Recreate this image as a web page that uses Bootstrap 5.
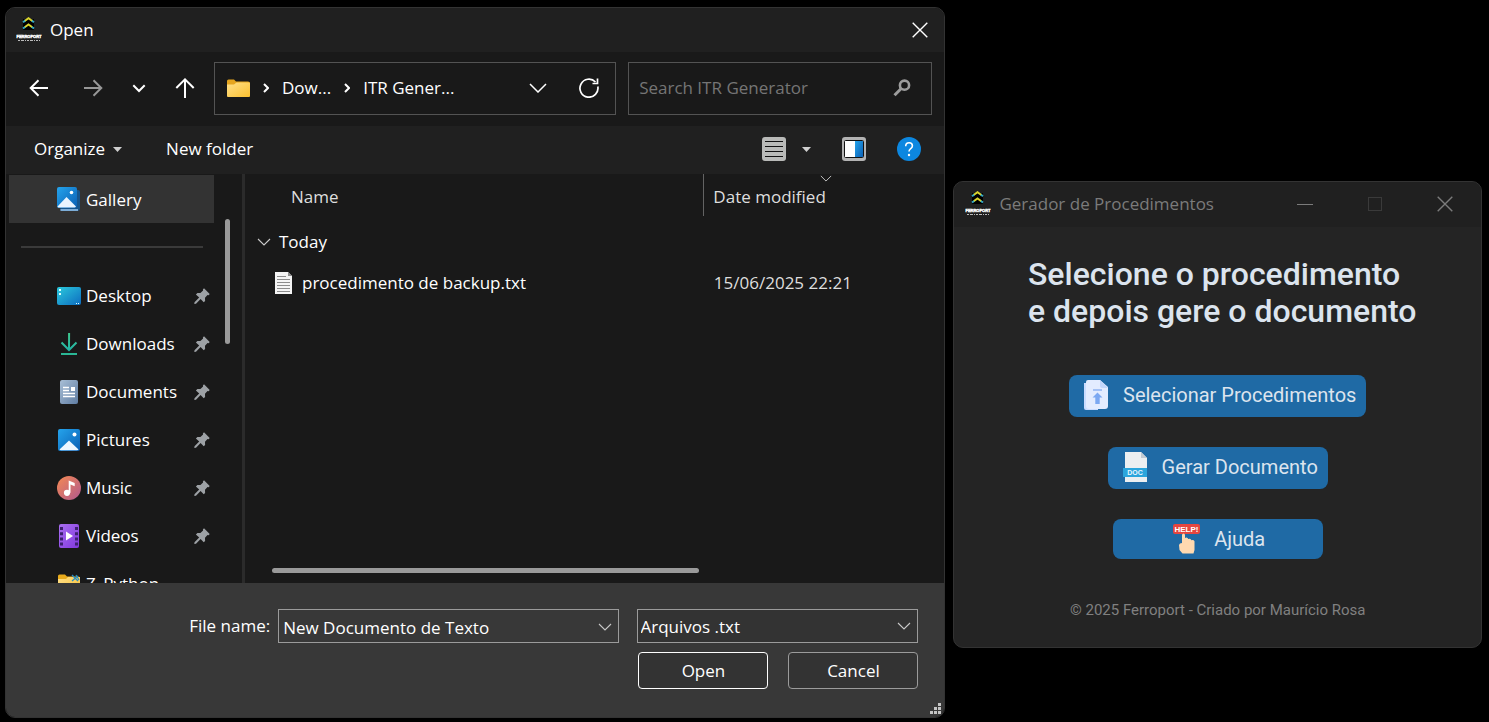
<!DOCTYPE html>
<html lang="pt-BR" data-bs-theme="dark">
<head>
<meta charset="utf-8">
<meta name="viewport" content="width=device-width, initial-scale=1">
<title>Gerador de Procedimentos</title>
<link href="https://cdn.jsdelivr.net/npm/bootstrap@5.3.0/dist/css/bootstrap.min.css" rel="stylesheet">
<style>
  body { background: #000; color: #fff; font-family: "Open Sans", "Noto Sans", sans-serif; font-size: 17px; line-height: 24px; }
  svg { display: block; flex: none; }
  button, input, select { font: inherit; color: inherit; }
  .desktop { min-height: 100vh; padding: 7px 7px 4px 5px; gap: 8px; }
  .win { border: 1px solid #333; border-radius: 10px; overflow: hidden; min-width: 0; }
  .picker { flex: 941 1 0; background: #191919; }
  .app { flex: 528 1 0; background: #242424; margin-top: 174px; }
  .plain { background: none; border: 0; padding: 0; display: flex; align-items: center; justify-content: center; }

  .titlebar { background: #202020; height: 44px; padding: 0 16px 0 10px; gap: 8px; }
  .addressbar { height: 74px; padding: 0 12px 2px 18px; }
  .arrows { width: 190px; gap: 16px; }
  .arrows .plain { width: 30px; height: 32px; }
  .path, .search { border: 1px solid #535353; height: 53px; }
  .path { flex: 1 1 0; padding: 0 16px 0 12px; min-width: 0; }
  .path a { color: #fff; text-decoration: none; }
  .crumb { margin: 0 13px; }
  .search { flex: 0 0 33.5%; margin-left: 12px; padding: 0 20px 0 10px; min-width: 0; }
  .search input { background: none; border: 0; outline: 0; min-width: 0; padding: 0; }
  .search input::placeholder { color: #757575; opacity: 1; }
  .toolbar { background: #202020; height: 48px; padding: 0 23px 2px 28px; gap: 31px; }
  .toolbar .newdir { margin: 0 auto 0 13px; }

  .browser { flex: 1 1 0; min-height: 0; }
  .side { width: 239px; padding: 1px 0 0 3px; border-right: 3px solid #2b2b2b; overflow: hidden; }
  .places { width: 205px; }
  .place { display: flex; align-items: center; height: 48px; padding: 1px 4px 0 47px; gap: 5px; color: #fff; text-decoration: none; flex: none; }
  .place.current { background: #333; }
  .place span { flex: 1; white-space: nowrap; }
  .split { height: 48px; padding: 23px 11px 0 12px; flex: none; }
  .split div { height: 2px; background: #3a3a3a; }
  .thumb { background: #9a9a9a; border-radius: 3px; }
  .thumb-v { width: 5px; height: 125px; margin: 44px 0 0 11px; }
  .thumb-h { width: 61%; height: 5px; margin: 0 0 10px 27px; }
  .files { width: 100%; table-layout: fixed; border-collapse: collapse; }
  .files th, .files td { padding: 0; font-weight: 400; }
  .files thead th { height: 42px; color: #dedede; padding: 4px 0 0 46px; }
  .files thead th + th { border-left: 1px solid #636363; padding-left: 9px; }
  .files td + td { color: #dedede; padding-left: 10px; }
  .sortmark { position: absolute; left: 116px; top: 1px; }
  .group { height: 52px; padding-left: 12px !important; }
  .entry { height: 30px; padding-left: 29px !important; }

  .bottom { background: #383838; padding: 26px 26px 28px 0; position: relative; }
  .fieldbox { border: 1px solid #9b9b9b; height: 34px; min-width: 0; }
  .namebox { flex: 0 0 37.3%; padding: 2px 6px 0 4px; margin: 0 18px 0 8px; }
  .namebox input { background: none; border: 0; outline: 0; min-width: 0; padding: 0; height: 30px; }
  .typebox { flex: 0 0 30.9%; position: relative; background: #333; }
  .typebox select { appearance: none; background: none; border: 0; width: 100%; height: 32px; padding: 1px 24px 0 3px; outline: 0; }
  .typebox svg { position: absolute; right: 6px; top: 12px; pointer-events: none; }
  .actions { gap: 20px; margin-top: 9px; }
  .act { width: 130px; height: 37px; background: #333; border: 1px solid #9b9b9b; border-radius: 4px; padding: 1px 0 0; }
  .act.main { border-color: #fff; }
  .grip { position: absolute; right: 3px; bottom: 3px; }
  .label-col { flex: 1 1 0; text-align: right; white-space: nowrap; }

  .app .titlebar { color: #7b7b7b; padding: 0 28px 2px 11px; height: 45px; }
  .controls { gap: 54px; }
  .app-body { font-family: Roboto, sans-serif; padding: 29px 16px 27px; }
  .app h1 { font-size: 32px; line-height: 37px; font-weight: 500; color: #dce4ee; margin: 0 0 45px 9px; }
  .cta { background: #1f6aa5; color: #dce4ee; border: 0; border-radius: 8px; font-size: 20px; line-height: 24px; height: 42px; padding: 0 10px 2px 12px; display: flex; align-items: center; justify-content: center; gap: 12px; white-space: nowrap; }
  .cta.help { width: 210px; height: 40px; padding-bottom: 0; }
  .stack { gap: 30px; }
  .credit { font-size: 15px; line-height: 20px; color: #808080; margin: 41px 0 0; }
</style>
</head>
<body>
<svg width="0" height="0" class="position-absolute" aria-hidden="true">
  <defs>
    <linearGradient id="gBlue" x1="0" y1="0" x2="1" y2="1"><stop offset="0" stop-color="#25a4ec"/><stop offset="1" stop-color="#0a5fb4"/></linearGradient>
    <linearGradient id="gDesk" x1="0" y1="0" x2="1" y2="1"><stop offset="0" stop-color="#2bc9dc"/><stop offset="1" stop-color="#0d6cc0"/></linearGradient>
    <linearGradient id="gDoc" x1="0" y1="0" x2="1" y2="1"><stop offset="0" stop-color="#a9bfd6"/><stop offset="1" stop-color="#5f7da3"/></linearGradient>
    <linearGradient id="gMus" x1="0" y1="0" x2="1" y2="1"><stop offset="0" stop-color="#f58a52"/><stop offset="1" stop-color="#b0588f"/></linearGradient>
    <linearGradient id="gVid" x1="0" y1="0" x2="1" y2="1"><stop offset="0" stop-color="#a96ff0"/><stop offset="1" stop-color="#8238de"/></linearGradient>
    <linearGradient id="gFold" x1="0" y1="0" x2="1" y2="1"><stop offset="0" stop-color="#ffe08a"/><stop offset="1" stop-color="#fbc02f"/></linearGradient>
    <linearGradient id="gDown" x1="0" y1="0" x2="0" y2="1"><stop offset="0" stop-color="#3fc98d"/><stop offset="1" stop-color="#22b3a5"/></linearGradient>
    <symbol id="logo" viewBox="0 0 26 26">
      <rect x="7" y="2" width="11" height="11" fill="#000"/>
      <path d="M7 5.200 9.500 3.400M15.500 3.400l2.500 1.800M7 11.500 9.500 9.700M15.500 9.700l2.500 1.800" stroke="#35a8c4" stroke-width="2"/>
      <path d="M9 3.700 12.500 1.200l3.500 2.500M9 10l3.500-2.500L16 10" fill="none" stroke="#d8d32c" stroke-width="2"/>
      <text x="13" y="20.500" text-anchor="middle" font-family="Liberation Sans, sans-serif" font-weight="700" font-size="4" fill="#fff" stroke="#fff" stroke-width=".4">FERROPORT</text>
      <path d="M2 23.500h22" stroke="#bbb" stroke-dasharray="2 1 3 1 1 1"/>
    </symbol>
    <symbol id="pin" viewBox="0 0 16 16"><path fill="#9da1a5" d="M10 .3l5.700 5.700-1 1.200-1.200-.1-2.500 2.700.1 3.100-1.400 1.400-3.100-3.200-4.600 4.600-1.700.2.200-1.700L5.200 9.600 1.900 6.500l1.500-1.500 3 .1L9.100 2.600 8.900 1.400z"/></symbol>
    <symbol id="chev" viewBox="0 0 14 8"><path d="M1 1l6 6 6-6" fill="none" stroke="#c8c8c8" stroke-width="1.100"/></symbol>
    <symbol id="x" viewBox="0 0 16 16"><path d="M.7.7l14.600 14.600M15.300.7.7 15.300" stroke="currentColor" stroke-width="1.400"/></symbol>
  </defs>
</svg>

<main class="desktop d-flex align-items-start">

  <section class="win picker d-flex flex-column align-self-stretch" aria-label="Open">
    <header class="titlebar d-flex align-items-center">
      <svg width="26" height="26"><use href="#logo"/></svg>
      <span class="flex-grow-1">Open</span>
      <button class="plain" aria-label="Close"><svg width="16" height="16"><use href="#x"/></svg></button>
    </header>

    <div class="addressbar d-flex align-items-center">
      <nav class="arrows d-flex flex-shrink-0" aria-label="History">
        <button class="plain" aria-label="Back"><svg width="20" height="18" viewBox="0 0 20 18" fill="none" stroke="#fff" stroke-width="2"><path d="M19 9H2M9.500 1.200 1.700 9l7.800 7.800"/></svg></button>
        <button class="plain ms-2" aria-label="Forward"><svg width="20" height="18" viewBox="0 0 20 18" fill="none" stroke="#979797" stroke-width="2"><path d="M1 9h17M10.500 1.200 18.300 9l-7.800 7.800"/></svg></button>
        <button class="plain" aria-label="Recent locations"><svg width="14" height="9" viewBox="0 0 14 9" fill="none" stroke="#fff" stroke-width="2"><path d="M1.300 1.300 7 7l5.700-5.700"/></svg></button>
        <button class="plain" aria-label="Up"><svg width="20" height="20" viewBox="0 0 20 20" fill="none" stroke="#fff" stroke-width="2"><path d="M10 20V2M1.300 10 10 1.400l8.700 8.600"/></svg></button>
      </nav>
      <div class="path d-flex align-items-center">
        <svg width="23" height="19" viewBox="0 0 23 19"><path d="M0 2Q0 .5 1.500.5H7l2 2h12Q23 2.500 23 4v12H0z" fill="#e5a51f"/><path d="M0 5.500h7l2.500-2H22q1 0 1 1V17q0 1-1 1H1q-1 0-1-1z" fill="url(#gFold)"/></svg>
        <svg class="crumb" width="6" height="10" viewBox="0 0 6 10"><path d="M1 1l4 4-4 4" fill="none" stroke="#fff" stroke-width="2"/></svg>
        <a href="#">Dow...</a>
        <svg class="crumb" width="6" height="10" viewBox="0 0 6 10"><path d="M1 1l4 4-4 4" fill="none" stroke="#fff" stroke-width="2"/></svg>
        <a href="#" class="flex-grow-1 text-nowrap">ITR Gener...</a>
        <button class="plain me-4" aria-label="Previous locations"><svg width="18" height="10" viewBox="0 0 18 10" fill="none" stroke="#fff" stroke-width="1.500"><path d="M1 1l8 8 8-8"/></svg></button>
        <button class="plain ms-2" aria-label="Refresh"><svg width="20" height="20" viewBox="0 0 20 20" fill="none" stroke="#fff" stroke-width="1.700"><path d="M18.800 8.500A9 9 0 1 1 16.500 4M18.500.5v5h-5"/></svg></button>
      </div>
      <div class="search d-flex align-items-center">
        <input class="flex-grow-1" type="search" placeholder="Search ITR Generator" aria-label="Search ITR Generator">
        <svg width="18" height="18" viewBox="0 0 18 18" fill="none" stroke="#9c9c9c"><circle cx="11.500" cy="6.200" r="4.600" stroke-width="2.600"/><path d="M8 9.700l-6.500 6.600" stroke-width="3"/></svg>
      </div>
    </div>

    <div class="toolbar d-flex align-items-center">
      <button class="plain">Organize<svg class="ms-2" width="9" height="5" viewBox="0 0 9 5"><path d="M0 0h9L4.500 5z" fill="#d0d0d0"/></svg></button>
      <button class="plain newdir">New folder</button>
      <button class="plain gap-3" aria-label="Change view"><svg width="24" height="24" viewBox="0 0 24 24"><rect width="24" height="24" rx="3" fill="#b9bab8"/><path d="M3 4.500h18M3 9.500h18M3 14.500h18M3 19.500h18" stroke="#111"/></svg><svg width="9" height="5" viewBox="0 0 9 5"><path d="M0 0h9L4.500 5z" fill="#d0d0d0"/></svg></button>
      <button class="plain" aria-label="Preview pane"><svg width="24" height="24" viewBox="0 0 24 24"><rect width="24" height="24" rx="3" fill="#b3b3b3"/><rect x="2.500" y="3.500" width="19" height="17" rx="1" fill="#fff" stroke="#111"/><path d="M13 4h8v16h-8z" fill="url(#gBlue)"/></svg></button>
      <button class="plain" aria-label="Help"><svg width="24" height="24" viewBox="0 0 24 24"><circle cx="12" cy="12" r="12" fill="#0c87e0"/><path d="M8.700 9.200q0-3.500 3.400-3.500 3.300 0 3.300 3 0 1.700-1.700 2.900Q12 12.800 12 14.600" fill="none" stroke="#fff" stroke-width="1.600"/><circle cx="12" cy="18" r="1.200" fill="#fff"/></svg></button>
    </div>

    <div class="browser d-flex">
      <aside class="side d-flex flex-shrink-0">
        <nav class="places d-flex flex-column flex-shrink-0" aria-label="Places">
          <a href="#" class="place current"><svg width="25" height="25" viewBox="0 0 25 25"><path d="M21 3h1q2 0 2 2v16q0 3-3 3H6q-2 0-2-2z" fill="#16558c"/><path d="M4.500 23H22" stroke="#9fcaf0" stroke-width="1.600"/><rect x="1" width="20" height="21" rx="2" fill="url(#gBlue)"/><path d="M1.500 19.500 10.500 10l9.500 9.500q-.5 1-1.500 1h-16q-1 0-1-1z" fill="#e9f4ff"/><circle cx="15.500" cy="5.500" r="1.800" fill="#fff"/></svg><span>Gallery</span></a>
          <div class="split"><div></div></div>
          <a href="#" class="place"><svg width="25" height="20" viewBox="0 0 25 20"><rect x="1" y="1" width="24" height="18" rx="2" fill="url(#gDesk)"/><path d="M3 3h2v2H3zM3 7h2v2H3zM20 17h1v1h-1zM22 17h1v1h-1z" fill="#dff"/></svg><span>Desktop</span><svg width="16" height="16"><use href="#pin"/></svg></a>
          <a href="#" class="place"><svg width="25" height="24" viewBox="0 0 25 24" fill="none" stroke="url(#gDown)" stroke-width="2"><path d="M13.100 1 13 18M5.500 10.500 13 18l7.500-7.500"/><path d="M5 22h16" stroke="#2ab795"/></svg><span>Downloads</span><svg width="16" height="16"><use href="#pin"/></svg></a>
          <a href="#" class="place"><svg width="25" height="24" viewBox="0 0 25 24"><rect x="4" width="18" height="24" rx="2" fill="url(#gDoc)"/><path d="M7 7.500h6M7 10.500h6M7 13.500h12M7 16.500h12" stroke="#fff" stroke-width="1.300"/><path d="M15 7h4v4h-4z" fill="#fff"/></svg><span>Documents</span><svg width="16" height="16"><use href="#pin"/></svg></a>
          <a href="#" class="place"><svg width="25" height="22" viewBox="0 0 25 22"><rect x="2" width="22" height="22" rx="2" fill="url(#gBlue)"/><path d="M3.500 20.500 13 11.500l9.500 9q-.5.800-1.500.8H5q-1 0-1.500-.8z" fill="#eef7ff"/><circle cx="18.500" cy="5.500" r="2" fill="#fff"/></svg><span>Pictures</span><svg width="16" height="16"><use href="#pin"/></svg></a>
          <a href="#" class="place"><svg width="25" height="24" viewBox="0 0 25 24"><circle cx="13" cy="12" r="12" fill="url(#gMus)"/><circle cx="11" cy="16.800" r="3.100" fill="#fff"/><path d="M12.700 16.800V4.500l6 2.500v3.200l-4.200-1.700v8.300z" fill="#fff"/></svg><span>Music</span><svg width="16" height="16"><use href="#pin"/></svg></a>
          <a href="#" class="place"><svg width="25" height="24" viewBox="0 0 25 24"><rect x="3" width="20" height="24" rx="2" fill="url(#gVid)"/><path d="M5.500 3v19M20.500 3v19" stroke="#3d2070" stroke-width="3" stroke-dasharray="3 2.200"/><path d="M10 7.500v9l7-4.500z" fill="#fff"/></svg><span>Videos</span><svg width="16" height="16"><use href="#pin"/></svg></a>
          <a href="#" class="place"><svg width="25" height="20" viewBox="0 0 25 20"><path d="M2 2Q2 .5 3.500.5H9l2 2h11q2 0 2 1.500v14H2z" fill="#e9ab1c"/><path d="M2 5h8l2-2h12v16H2z" fill="url(#gFold)"/><path d="M16 1l6 6M22 2l-6 5M20 1l3 5" stroke="#2c8fc0" stroke-width="1.300"/></svg><span>Z_Python</span></a>
        </nav>
        <div class="thumb thumb-v flex-shrink-0"></div>
      </aside>

      <div class="flex-grow-1 d-flex flex-column">
        <table class="files">
          <colgroup><col style="width:65.600%"><col></colgroup>
          <thead>
            <tr><th scope="col">Name</th><th scope="col" class="position-relative">Date modified<svg class="sortmark" width="12" height="7"><use href="#chev"/></svg></th></tr>
          </thead>
          <tbody>
            <tr><th class="group" colspan="2" scope="rowgroup"><div class="d-flex align-items-center gap-2"><svg width="14" height="8"><use href="#chev"/></svg>Today</div></th></tr>
            <tr><td class="entry"><div class="d-flex align-items-center text-nowrap"><svg class="me-2" width="20" height="22" viewBox="0 0 20 22"><path d="M1 0h13l4 4v18H1z" fill="#f4f4f4"/><path d="M14 0v4h4z" fill="#8d8d8d"/><path d="M3 4.500h9M3 7.500h13M3 10.500h13M3 13.500h13M3 16.500h13M3 19.500h13" stroke="#8b8b8b"/></svg>procedimento de backup.txt</div></td><td>15/06/2025 22:21</td></tr>
          </tbody>
        </table>
        <div class="thumb thumb-h mt-auto"></div>
      </div>
    </div>

    <form class="bottom">
      <div class="d-flex align-items-center">
        <label class="label-col" for="fname">File name:</label>
        <div class="fieldbox namebox d-flex align-items-center">
          <input id="fname" class="flex-grow-1" type="text" value="New Documento de Texto">
          <button type="button" class="plain" aria-label="Recent names"><svg width="14" height="8"><use href="#chev"/></svg></button>
        </div>
        <div class="fieldbox typebox">
          <select aria-label="File type"><option>Arquivos .txt</option></select>
          <svg width="14" height="8"><use href="#chev"/></svg>
        </div>
      </div>
      <div class="actions d-flex justify-content-end">
        <button type="button" class="act main">Open</button>
        <button type="button" class="act">Cancel</button>
      </div>
      <svg class="grip" width="11" height="11" viewBox="0 0 11 11" fill="#c4c4c4"><path d="M8 0h3v3H8zM4 4h3v3H4zM8 4h3v3H8zM0 8h3v3H0zM4 8h3v3H4zM8 8h3v3H8z"/></svg>
    </form>
  </section>

  <section class="win app" aria-label="Gerador de Procedimentos">
    <header class="titlebar d-flex align-items-center">
      <svg width="26" height="26"><use href="#logo"/></svg>
      <span class="flex-grow-1 text-nowrap">Gerador de Procedimentos</span>
      <div class="controls d-flex">
        <button class="plain" aria-label="Minimizar"><svg width="16" height="16" viewBox="0 0 16 16"><path d="M0 8.500h16" stroke="#7b7b7b"/></svg></button>
        <button class="plain" aria-label="Maximizar" disabled><svg width="16" height="16" viewBox="0 0 16 16"><rect x="1.500" y="1.500" width="13" height="13" fill="none" stroke="#3a3a3a"/></svg></button>
        <button class="plain" aria-label="Fechar"><svg width="16" height="16"><use href="#x"/></svg></button>
      </div>
    </header>
    <div class="app-body d-flex flex-column align-items-center">
      <h1>Selecione o procedimento<br>e depois gere o documento</h1>
      <div class="stack d-flex flex-column align-items-center">
        <button class="cta"><svg width="30" height="30" viewBox="0 0 30 30"><path d="M3 3h14v27H5q-2 0-2-2z" fill="#c9dcff"/><path d="M7 0h12l8 7v19q0 3-3 3H8q-3 0-3-3V2q0-2 2-2z" fill="#e3ecff"/><path d="M19 0l8 8h-6q-2 0-2-2z" fill="#c3d7fb"/><path d="M12 10h9" stroke="#8fb3f2" stroke-width="1.500"/><path d="M16.500 12.500l5 5h-2.800V24h-4.400v-6.500h-2.800z" fill="#7ba8f2"/></svg>Selecionar Procedimentos</button>
        <button class="cta"><svg width="30" height="30" viewBox="0 0 30 30"><path d="M5 0h16l6 6v24H5z" fill="#eceff1"/><path d="M21 0l6 6h-6z" fill="#c3cbd3"/><path d="M3 16h24v9H3z" fill="#2ba5dc"/><text x="15" y="23" text-anchor="middle" font-family="Liberation Sans, sans-serif" font-size="7" font-weight="700" fill="#e8f6ff">DOC</text></svg>Gerar Documento</button>
        <button class="cta help"><svg width="30" height="30" viewBox="0 0 30 30"><rect x="1" y="0" width="27" height="10" rx="2" fill="#e5463f"/><text x="14.500" y="7.500" text-anchor="middle" font-family="Liberation Sans, sans-serif" font-size="8" font-weight="700" fill="#fff">HELP!</text><path d="M10 11q0-1.500 1.500-1.500T13 11v3q1.500-1 2.800.3l.4.700q1.800-.9 2.800.4l.3.800q2.400-.6 3.200 1V26l-1 3.500H10.500L7.500 26 7 21q.5-2 3-2z" fill="#ffd9b0"/></svg>Ajuda</button>
      </div>
      <p class="credit">© 2025 Ferroport - Criado por Maurício Rosa</p>
    </div>
  </section>
</main>
<script src="https://cdn.jsdelivr.net/npm/bootstrap@5.3.0/dist/js/bootstrap.bundle.min.js"></script>
</body>
</html>
